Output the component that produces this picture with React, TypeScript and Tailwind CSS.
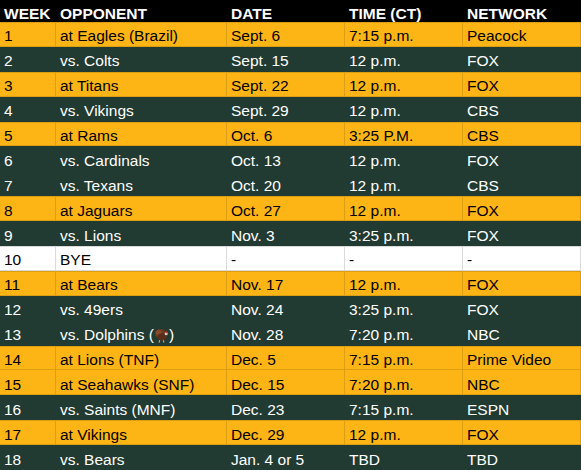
import type { ReactNode } from 'react'

type Game = {
  week: string
  opponent: ReactNode
  date: string
  time: string
  network: string
  kind: 'away' | 'home' | 'bye'
}

function Turkey() {
  return (
    <svg viewBox="0 0 16 16" className="inline-block w-[15px] h-[15px] align-[-2px]">
      <ellipse cx="7" cy="6" rx="6" ry="5" fill="#6b3a22" />
      <ellipse cx="5" cy="5" rx="3" ry="3" fill="#8a4b2c" />
      <ellipse cx="8.5" cy="9.5" rx="5" ry="4" fill="#5a2e1a" />
      <circle cx="13" cy="6" r="1.6" fill="#d9d2c8" />
      <circle cx="13.5" cy="4.5" r="1" fill="#c8322c" />
      <path d="M6 13 L5.5 15.5 M10 13 L10.5 15.5" stroke="#c9a27a" strokeWidth="1.2" />
    </svg>
  )
}

const games: Game[] = [
  { week: '1', opponent: 'at Eagles (Brazil)', date: 'Sept. 6', time: '7:15 p.m.', network: 'Peacock', kind: 'away' },
  { week: '2', opponent: 'vs. Colts', date: 'Sept. 15', time: '12 p.m.', network: 'FOX', kind: 'home' },
  { week: '3', opponent: 'at Titans', date: 'Sept. 22', time: '12 p.m.', network: 'FOX', kind: 'away' },
  { week: '4', opponent: 'vs. Vikings', date: 'Sept. 29', time: '12 p.m.', network: 'CBS', kind: 'home' },
  { week: '5', opponent: 'at Rams', date: 'Oct. 6', time: '3:25 P.M.', network: 'CBS', kind: 'away' },
  { week: '6', opponent: 'vs. Cardinals', date: 'Oct. 13', time: '12 p.m.', network: 'FOX', kind: 'home' },
  { week: '7', opponent: 'vs. Texans', date: 'Oct. 20', time: '12 p.m.', network: 'CBS', kind: 'home' },
  { week: '8', opponent: 'at Jaguars', date: 'Oct. 27', time: '12 p.m.', network: 'FOX', kind: 'away' },
  { week: '9', opponent: 'vs. Lions', date: 'Nov. 3', time: '3:25 p.m.', network: 'FOX', kind: 'home' },
  { week: '10', opponent: 'BYE', date: '-', time: '-', network: '-', kind: 'bye' },
  { week: '11', opponent: 'at Bears', date: 'Nov. 17', time: '12 p.m.', network: 'FOX', kind: 'away' },
  { week: '12', opponent: 'vs. 49ers', date: 'Nov. 24', time: '3:25 p.m.', network: 'FOX', kind: 'home' },
  {
    week: '13',
    opponent: (
      <>
        vs. Dolphins (<Turkey /> )
      </>
    ),
    date: 'Nov. 28',
    time: '7:20 p.m.',
    network: 'NBC',
    kind: 'home',
  },
  { week: '14', opponent: 'at Lions (TNF)', date: 'Dec. 5', time: '7:15 p.m.', network: 'Prime Video', kind: 'away' },
  { week: '15', opponent: 'at Seahawks (SNF)', date: 'Dec. 15', time: '7:20 p.m.', network: 'NBC', kind: 'away' },
  { week: '16', opponent: 'vs. Saints (MNF)', date: 'Dec. 23', time: '7:15 p.m.', network: 'ESPN', kind: 'home' },
  { week: '17', opponent: 'at Vikings', date: 'Dec. 29', time: '12 p.m.', network: 'FOX', kind: 'away' },
  { week: '18', opponent: 'vs. Bears', date: 'Jan. 4 or 5', time: 'TBD', network: 'TBD', kind: 'home' },
]

const rowStyle = {
  away: 'bg-[#fdb515] text-black border-[#dc9e12]',
  home: 'bg-[#213a32] text-white border-[#213a32]',
  bye: 'bg-white text-black border-[#dadada]',
}

export default function App() {
  const headers = ['WEEK', 'OPPONENT', 'DATE', 'TIME (CT)', 'NETWORK']

  return (
    <div
      className="w-[581px] h-[470px] overflow-hidden bg-[#213a32] grid grid-cols-[56px_171px_118px_118px_118px] grid-rows-[22px_repeat(18,1fr)] text-[15.5px] leading-none"
      style={{ fontFamily: '"Liberation Sans", Arial, sans-serif' }}
    >
      {headers.map(h => (
        <div key={h} className="bg-black text-white font-bold flex items-end pb-[1px] pl-[4px] whitespace-nowrap">
          {h}
        </div>
      ))}

      {games.map((g, i) => {
        const prev = i > 0 ? games[i - 1].kind : 'header'
        const topLine = g.kind !== 'home' && prev !== g.kind
        const cells = [g.week, g.opponent, g.date, g.time, g.network]
        return cells.map((c, j) => (
          <div
            key={`${g.week}-${j}`}
            className={`${rowStyle[g.kind]} flex items-end pb-[2px] pl-[4px] whitespace-nowrap border-r border-b ${topLine ? 'border-t' : ''}`}
          >
            {c}
          </div>
        ))
      })}
    </div>
  )
}
